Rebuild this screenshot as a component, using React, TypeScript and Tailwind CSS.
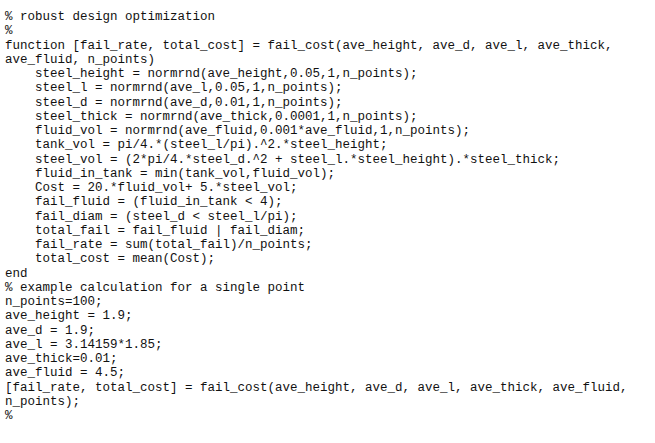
const lines = [
  "% robust design optimization",
  "%",
  "function [fail_rate, total_cost] = fail_cost(ave_height, ave_d, ave_l, ave_thick,",
  "ave_fluid, n_points)",
  "    steel_height = normrnd(ave_height,0.05,1,n_points);",
  "    steel_l = normrnd(ave_l,0.05,1,n_points);",
  "    steel_d = normrnd(ave_d,0.01,1,n_points);",
  "    steel_thick = normrnd(ave_thick,0.0001,1,n_points);",
  "    fluid_vol = normrnd(ave_fluid,0.001*ave_fluid,1,n_points);",
  "    tank_vol = pi/4.*(steel_l/pi).^2.*steel_height;",
  "    steel_vol = (2*pi/4.*steel_d.^2 + steel_l.*steel_height).*steel_thick;",
  "    fluid_in_tank = min(tank_vol,fluid_vol);",
  "    Cost = 20.*fluid_vol+ 5.*steel_vol;",
  "    fail_fluid = (fluid_in_tank < 4);",
  "    fail_diam = (steel_d < steel_l/pi);",
  "    total_fail = fail_fluid | fail_diam;",
  "    fail_rate = sum(total_fail)/n_points;",
  "    total_cost = mean(Cost);",
  "end",
  "% example calculation for a single point",
  "n_points=100;",
  "ave_height = 1.9;",
  "ave_d = 1.9;",
  "ave_l = 3.14159*1.85;",
  "ave_thick=0.01;",
  "ave_fluid = 4.5;",
  "[fail_rate, total_cost] = fail_cost(ave_height, ave_d, ave_l, ave_thick, ave_fluid,",
  "n_points);",
  "%",
];

export default function App() {
  return (
    <div className="w-[655px] h-[443px] bg-white overflow-hidden pl-[5px] pt-[10px]">
      <pre className="font-['Liberation_Mono',monospace] text-[12.5px] leading-[14.25px] text-[#111]">
        {lines.map((l, i) => (
          <div key={i} className="whitespace-pre">{l}</div>
        ))}
      </pre>
    </div>
  );
}
